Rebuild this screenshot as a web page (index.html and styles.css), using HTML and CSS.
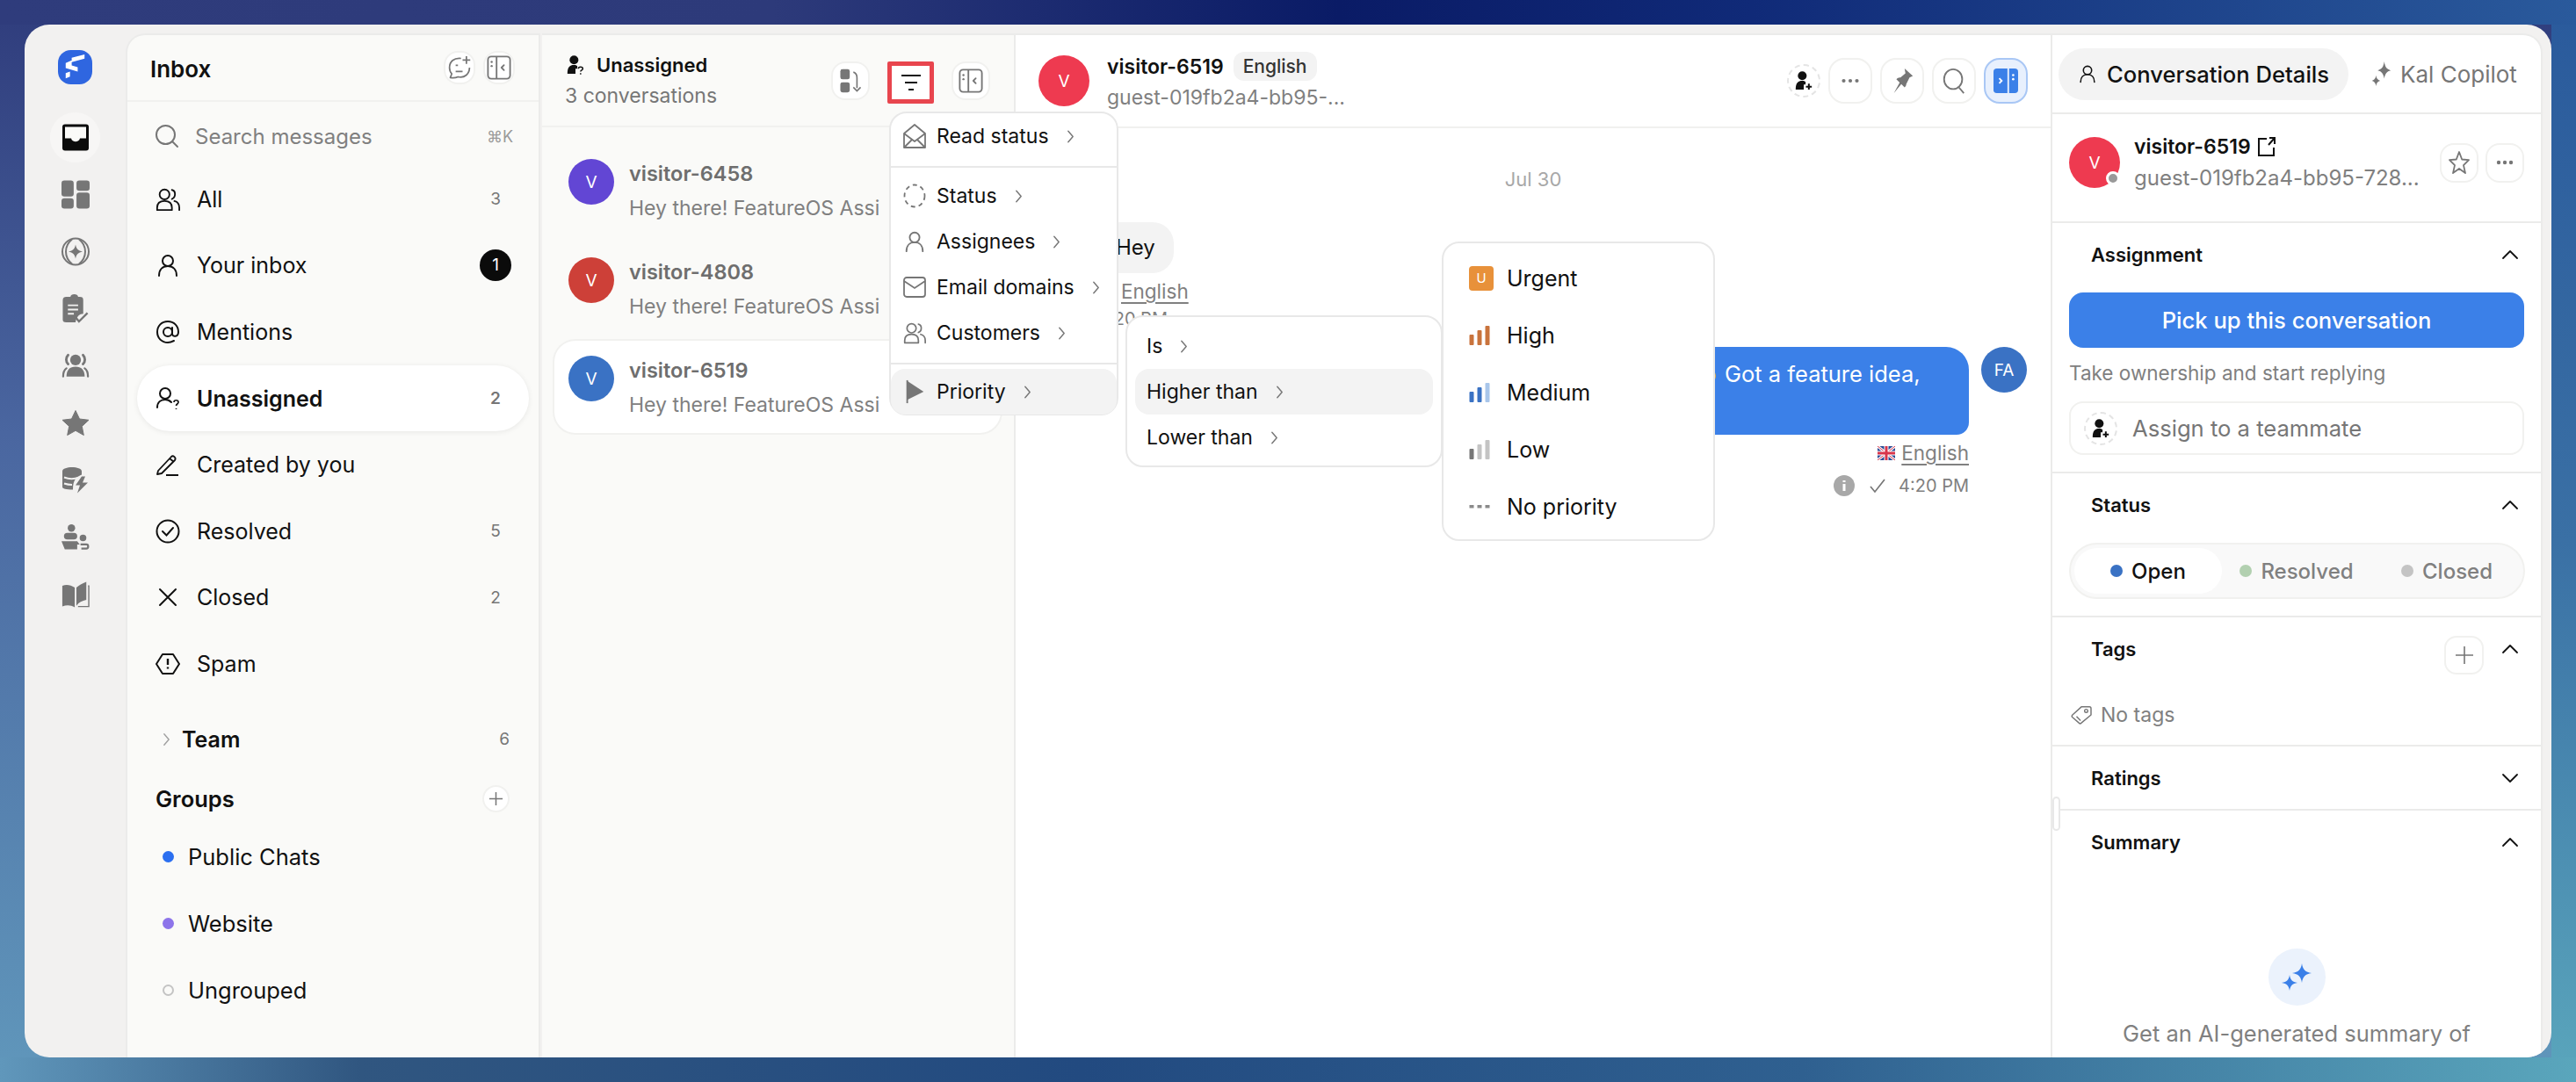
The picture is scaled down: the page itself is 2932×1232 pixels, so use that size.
FILE: index.html
```html
<!DOCTYPE html>
<html lang="en">
<head>
    <meta charset="UTF-8">
    <title>Inbox</title>
    <link rel="stylesheet" href="styles.css">
</head>
<body>
<svg class="defs" width="0" height="0">
    <symbol id="chev-right" viewBox="0 0 10 18"><path d="M2 2l6 7-6 7" fill="none" stroke="currentColor" stroke-width="1.6" stroke-linecap="round" stroke-linejoin="round"/></symbol>
    <symbol id="chev-up" viewBox="0 0 20 12"><path d="M2 10l8-8 8 8" fill="none" stroke="currentColor" stroke-width="1.8" stroke-linecap="round" stroke-linejoin="round"/></symbol>
    <symbol id="user" viewBox="0 0 28 28"><circle cx="14" cy="9" r="6" fill="none" stroke="currentColor" stroke-width="2"/><path d="M4 26c0-7 4-11 10-11s10 4 10 11" fill="none" stroke="currentColor" stroke-width="2" stroke-linecap="round"/></symbol>
    <symbol id="users" viewBox="0 0 30 28"><circle cx="11" cy="8" r="6" fill="none" stroke="currentColor" stroke-width="2"/><path d="M20 2.500c5 1 5 9 0 11M2 27v-3c0-5 3-8 9-8s9 3 9 8v3zM23 16c4 1 6 4 6 8v3" fill="none" stroke="currentColor" stroke-width="2" stroke-linecap="round" stroke-linejoin="round"/></symbol>
    <symbol id="panel" viewBox="0 0 30 30"><rect x="1.500" y="1.500" width="27" height="27" rx="4" fill="none" stroke="currentColor" stroke-width="2"/><path d="M12 2v26M21 12l-3 3 3 3" fill="none" stroke="currentColor" stroke-width="2" stroke-linecap="round" stroke-linejoin="round"/><circle cx="6" cy="8" r="1.300" fill="currentColor"/><circle cx="6" cy="13" r="1.300" fill="currentColor"/></symbol>
    <symbol id="assign" viewBox="0 0 24 28"><circle cx="10" cy="7" r="6" fill="currentColor"/><path d="M1 26c0-9 3-12 9-12 2 0 3.500.5 4.500 1.500V19H12v7z" fill="currentColor"/><path d="M19 18v8M15 22h8" stroke="currentColor" stroke-width="2.400"/></symbol>
    <symbol id="sparkle" viewBox="0 0 36 32"><path d="M24 0c1 7 4 10 11 11-7 1-10 4-11 11-1-7-4-10-11-11 7-1 10-4 11-11zM10 13c.8 5.500 3 8 9 9-6 1-8.200 3.500-9 9-.8-5.500-3-8-9-9 6-1 8.200-3.500 9-9z" fill="currentColor"/></symbol>
</svg>

<div class="window">
    <!-- Rail -->
    <aside class="rail">
        <svg class="logo" viewBox="0 0 40 40"><rect width="40" height="40" rx="15" fill="#2f66e0"/><path d="M16 9l15-4v5l-15 4zM9 15l7-3v6l7 2v5L9 21zM9 27l5-2v6l-5 2z" fill="#fff"/></svg>
        <a class="rail-btn active"><svg viewBox="0 0 32 32"><rect x="1" y="1" width="30" height="30" rx="3" fill="#0b0b0b"/><path d="M4 4h24v13h-7c-1 5-9 5-10 0H4z" fill="#fafaf8"/></svg></a>
        <a class="rail-btn"><svg viewBox="0 0 30 30"><g fill="#767676"><rect width="13" height="17" rx="3"/><rect x="16" width="14" height="11" rx="3"/><rect y="19" width="13" height="11" rx="3"/><rect x="16" y="13" width="14" height="17" rx="3"/></g></svg></a>
        <a class="rail-btn"><svg viewBox="0 0 32 32"><g fill="none" stroke="#767676" stroke-width="2"><circle cx="16" cy="16" r="15"/><path d="M12 2c-5 4-7 8-7 14s2 10 7 14M20 2c5 4 7 8 7 14s-2 10-7 14"/></g><path d="M16 8c1 5 3 7 8 8-5 1-7 3-8 8-1-5-3-7-8-8 5-1 7-3 8-8z" fill="#767676"/></svg></a>
        <a class="rail-btn"><svg viewBox="0 0 30 34"><path d="M8 3h1c0-4 9-4 9 0h2c3 0 4 1 4 4v16c-4 0-8 3-9 10H4c-3 0-4-1-4-3V7c0-3 2-4 4-4z" fill="#767676"/><path d="M6 13h12M6 18h12M6 23h7" stroke="#f2f1f0" stroke-width="2"/><path d="M15 27l4 5 10-10" fill="none" stroke="#767676" stroke-width="2.400"/></svg></a>
        <a class="rail-btn"><svg viewBox="0 0 34 28"><circle cx="17" cy="7" r="6.500" fill="#767676"/><path d="M8 1C5 4 5 9 8 12M26 1c3 3 3 8 0 11" fill="none" stroke="#767676" stroke-width="3" stroke-linecap="round"/><path d="M6 27c0-8 4-12 11-12s11 4 11 12z" fill="#767676"/><path d="M2 27c0-4 1-8 4-10M32 27c0-4-1-8-4-10" fill="none" stroke="#767676" stroke-width="2.400" stroke-linecap="round"/></svg></a>
        <a class="rail-btn"><svg viewBox="0 0 32 30"><path d="M16 1l4.500 9.500 10.500 1.300-7.700 7.100 2 10.100-9.300-5.200-9.300 5.200 2-10.100L1 11.800l10.500-1.300z" fill="#767676" stroke="#767676" stroke-linejoin="round"/></svg></a>
        <a class="rail-btn"><svg viewBox="0 0 32 32"><path d="M1 6c0-6 22-6 22 0v4c-6 3-10 5-10 17-8 0-12-1-12-3z" fill="#767676"/><path d="M3 13c5 2 12 2 17 0M3 20c3 1 6 1.500 9 1.500" stroke="#f2f1f0" stroke-width="2" fill="none"/><path d="M23 12l-7 10h5l-3 9 12-12h-6l3-7z" fill="#767676"/></svg></a>
        <a class="rail-btn"><svg viewBox="0 0 34 32"><circle cx="12" cy="5" r="4.500" fill="#767676"/><rect x="3" y="11" width="16" height="8" rx="4" fill="#767676"/><path d="M0 21h19l3 4h-3v6H4z" fill="#767676"/><circle cx="26" cy="17" r="4" fill="#767676"/><path d="M23 25h7c3 0 3 5 0 5h-6" fill="none" stroke="#767676" stroke-width="2.400"/></svg></a>
        <a class="rail-btn"><svg viewBox="0 0 34 32"><path d="M1 6c5-2 10-1 15 2v24c-5-3-10-3-15-1zM18 8c3-3 7-5 12-7v22c-5 1-9 3-12 7z" fill="#767676"/><path d="M32 6h1v25H20" fill="none" stroke="#767676" stroke-width="1.500"/></svg></a>
    </aside>

    <!-- Inbox nav -->
    <nav class="inbox">
        <header class="inbox-head">
            <h1>Inbox</h1>
            <div class="head-btns">
                <button class="round-btn"><svg viewBox="0 0 30 32"><path d="M17 4C8 3 2 8 2 16c0 3 1 6 3 8l-2 5c5 1 8 0 10-1 9 2 15-4 15-12" fill="none" stroke="#767676" stroke-width="2" stroke-linejoin="round"/><path d="M24 1v10M19 6h10M10 13h3M10 21h9" stroke="#767676" stroke-width="2"/></svg></button>
                <button class="round-btn"><svg class="i-panel"><use href="#panel"/></svg></button>
            </div>
        </header>
        <div class="search">
            <svg class="nav-icon gray" viewBox="0 0 28 28"><circle cx="12.500" cy="12.500" r="10.500" fill="none" stroke="currentColor" stroke-width="2"/><path d="M20 20l6 6" stroke="currentColor" stroke-width="2" stroke-linecap="round"/></svg>
            <span class="search-text">Search messages</span>
            <span class="kbd">⌘K</span>
        </div>
        <a class="nav-row"><svg class="nav-icon"><use href="#users"/></svg><span>All</span><em>3</em></a>
        <a class="nav-row"><svg class="nav-icon"><use href="#user"/></svg><span>Your inbox</span><b class="badge">1</b></a>
        <a class="nav-row"><svg class="nav-icon" viewBox="0 0 28 28"><circle cx="14" cy="14" r="5" fill="none" stroke="currentColor" stroke-width="2"/><path d="M19 9v7c0 4 7 4 7-2 0-7-5-12-12-12S2 7 2 14s5 12 12 12c3 0 5-1 7-2" fill="none" stroke="currentColor" stroke-width="2" stroke-linecap="round"/></svg><span>Mentions</span></a>
        <a class="nav-row current"><svg class="nav-icon" viewBox="0 0 28 28"><circle cx="11" cy="8" r="6" fill="none" stroke="currentColor" stroke-width="2"/><path d="M2 24c0-6 4-9 9-9 3 0 5 1 7 3" fill="none" stroke="currentColor" stroke-width="2" stroke-linecap="round"/><path d="M21 18c0-3 5-3 5 0 0 2-2.500 2-2.500 4M23.500 25v1" fill="none" stroke="currentColor" stroke-width="1.700"/></svg><span>Unassigned</span><em>2</em></a>
        <a class="nav-row"><svg class="nav-icon" viewBox="0 0 28 28"><path d="M3 21L18 5c2-2 6 1 4 4L7 24l-5 1zM16 7l5 4M12 26h14" fill="none" stroke="currentColor" stroke-width="1.800" stroke-linejoin="round"/></svg><span>Created by you</span></a>
        <a class="nav-row"><svg class="nav-icon" viewBox="0 0 28 28"><circle cx="14" cy="14" r="12.500" fill="none" stroke="currentColor" stroke-width="2"/><path d="M8 14l4.500 4.500L20 10" fill="none" stroke="currentColor" stroke-width="2" stroke-linecap="round"/></svg><span>Resolved</span><em>5</em></a>
        <a class="nav-row"><svg class="nav-icon" viewBox="0 0 28 28"><path d="M5 5l18 18M23 5L5 23" stroke="currentColor" stroke-width="2" stroke-linecap="round"/></svg><span>Closed</span><em>2</em></a>
        <a class="nav-row"><svg class="nav-icon" viewBox="0 0 28 28"><path d="M8 3h12l7 11-7 11H8L1 14z" fill="none" stroke="currentColor" stroke-width="2" stroke-linejoin="round"/><path d="M14 8v7M14 17.500v2" stroke="currentColor" stroke-width="2.400"/></svg><span>Spam</span></a>

        <div class="team-row">
            <svg class="team-chev"><use href="#chev-right"/></svg>
            <strong>Team</strong>
            <em>6</em>
        </div>
        <div class="groups-head">
            <strong>Groups</strong>
            <button class="round-btn small"><svg viewBox="0 0 18 18"><path d="M9 1v16M1 9h16" stroke="#767676" stroke-width="1.600"/></svg></button>
        </div>
        <a class="group-row"><i class="dot blue"></i>Public Chats</a>
        <a class="group-row"><i class="dot purple"></i>Website</a>
        <a class="group-row"><i class="dot empty"></i>Ungrouped</a>
    </nav>

    <!-- Conversation list -->
    <section class="list">
        <header class="list-head">
            <div>
                <div class="list-title">
                    <svg class="i-assign" viewBox="0 0 24 28"><circle cx="10" cy="7" r="6" fill="#111"/><path d="M1 26c0-9 3-12 9-12 2 0 3.500.5 4.500 1.500V19H12v7z" fill="#111"/><path d="M16 19c0-3 6-3 6 0 0 2-3 2-3 4M19 25v2" fill="none" stroke="#111" stroke-width="1.800"/></svg>Unassigned
                </div>
                <div class="list-sub">3 conversations</div>
            </div>
            <div class="list-btns">
                <button class="round-btn tall"><svg viewBox="0 0 28 34"><rect y="1" width="13" height="14" rx="3" fill="#767676"/><rect y="19" width="13" height="14" rx="3" fill="#767676"/><path d="M18 5c4 1 5 4 5 8v14M18 26l5 5 5-5" fill="none" stroke="#767676" stroke-width="2"/></svg></button>
                <button class="filter-btn"><svg viewBox="0 0 24 20"><path d="M1 2h22M5 10h14M9 18h6" stroke="#111" stroke-width="2"/></svg></button>
                <button class="round-btn tall"><svg class="i-panel"><use href="#panel"/></svg></button>
            </div>
        </header>
        <article class="conv">
            <div class="avatar violet">V</div>
            <div class="conv-body"><div class="conv-name">visitor-6458</div><div class="conv-msg">Hey there! FeatureOS Assi</div></div>
        </article>
        <article class="conv">
            <div class="avatar red">V</div>
            <div class="conv-body"><div class="conv-name">visitor-4808</div><div class="conv-msg">Hey there! FeatureOS Assi</div></div>
        </article>
        <article class="conv selected">
            <div class="avatar blue">V</div>
            <div class="conv-body"><div class="conv-name">visitor-6519</div><div class="conv-msg">Hey there! FeatureOS Assi</div></div>
        </article>
    </section>

    <!-- Thread -->
    <main class="thread">
        <header class="thread-head">
            <div class="avatar big rose">V</div>
            <div class="thread-who">
                <div class="thread-name">visitor-6519 <span class="lang-pill">English</span></div>
                <div class="thread-sub">guest-019fb2a4-bb95-...</div>
            </div>
            <div class="thread-btns">
                <button class="dashed-btn"><svg class="i-assign-sm"><use href="#assign"/></svg></button>
                <button class="square-btn"><svg class="i-dots" viewBox="0 0 24 6"><g fill="#767676"><circle cx="3" cy="3" r="2.500"/><circle cx="12" cy="3" r="2.500"/><circle cx="21" cy="3" r="2.500"/></g></svg></button>
                <button class="square-btn"><svg viewBox="0 0 28 32"><path d="M17 1l10 9-4 2-4 8c0 2-1 3-2 4l-4-4-9 11 7-13-4-4c2-2 4-2 5-2l6-5z" fill="#767676"/></svg></button>
                <button class="square-btn"><svg viewBox="0 0 28 32"><ellipse cx="13" cy="14" rx="11" ry="12" fill="none" stroke="#767676" stroke-width="2"/><path d="M20 24l6 7" stroke="#767676" stroke-width="2"/></svg></button>
                <button class="square-btn on"><svg viewBox="0 0 30 30"><rect width="30" height="30" rx="4" fill="#3b80e8"/><path d="M18 0v30" stroke="#e8f0fd" stroke-width="2"/><path d="M7 12l3 3-3 3" fill="none" stroke="#fff" stroke-width="2"/><circle cx="24" cy="8" r="1.400" fill="#fff"/><circle cx="24" cy="13" r="1.400" fill="#fff"/></svg></button>
            </div>
        </header>
        <div class="messages">
            <div class="date">Jul 30</div>
            <div class="msg-in">
                <div class="avatar rose">V</div>
                <div>
                    <div class="bubble-in">Hey</div>
                    <div class="msg-lang"><svg class="flag" viewBox="0 0 20 16"><rect width="20" height="16" fill="#2b4a94"/><path d="M0 0l20 16M20 0L0 16" stroke="#fff" stroke-width="3"/><path d="M10 0v16M0 8h20" stroke="#fff" stroke-width="5"/><path d="M10 0v16M0 8h20" stroke="#d8344a" stroke-width="3"/></svg><u>English</u></div>
                    <div class="msg-time">4:20 PM</div>
                </div>
            </div>
            <div class="msg-out">
                <div class="msg-out-col">
                    <div class="bubble-out"><i class="wave"></i>Got a feature idea,</div>
                    <div class="msg-lang"><svg class="flag" viewBox="0 0 20 16"><rect width="20" height="16" fill="#2b4a94"/><path d="M0 0l20 16M20 0L0 16" stroke="#fff" stroke-width="3"/><path d="M0 0l20 16M20 0L0 16" stroke="#d8344a" stroke-width="1"/><path d="M10 0v16M0 8h20" stroke="#fff" stroke-width="5"/><path d="M10 0v16M0 8h20" stroke="#d8344a" stroke-width="3"/></svg><u>English</u></div>
                    <div class="msg-meta">
                        <svg class="i-info" viewBox="0 0 24 24"><circle cx="12" cy="12" r="12" fill="#a8a8a8"/><path d="M12 10v8M12 6v2" stroke="#fff" stroke-width="3"/></svg>
                        <svg class="i-check" viewBox="0 0 20 18"><path d="M2 10l5 6L18 2" fill="none" stroke="#767676" stroke-width="1.700"/></svg>
                        <span>4:20 PM</span>
                    </div>
                </div>
                <div class="avatar blue">FA</div>
            </div>
        </div>
    </main>

    <!-- Details -->
    <aside class="details">
        <span class="resize-handle"></span>
        <div class="tabs">
            <a class="tab active"><svg class="i-tab"><use href="#user"/></svg>Conversation Details</a>
            <a class="tab kal"><svg class="i-kal" viewBox="0 0 24 30"><path d="M16 0c1 7 3 9 8 11-5 1-7 4-8 10-1-6-3-9-8-10 5-2 7-4 8-11zM6 17c.5 4 2 5.500 5 6.500-3 1-4.500 2.500-5 6.500-.5-4-2-5.500-5-6.500 3-1 4.500-2.500 5-6.500z" fill="#767676"/></svg>Kal Copilot</a>
        </div>
        <div class="profile">
            <div class="avatar big rose">V<i class="presence"></i></div>
            <div class="profile-who">
                <div class="profile-name">visitor-6519 <svg class="i-ext" viewBox="0 0 20 22"><path d="M10 2H1v19h17v-9M13 1h6v7M19 1l-7 8" fill="none" stroke="#111" stroke-width="2"/></svg></div>
                <div class="profile-sub">guest-019fb2a4-bb95-728...</div>
            </div>
            <button class="mini-btn"><svg viewBox="0 0 24 28"><path d="M12 2l3.200 8.500 7.800.6-6 6 2 9L12 21l-7 5.100 2-9-6-6 7.800-.6z" fill="none" stroke="#767676" stroke-width="1.800" stroke-linejoin="round"/></svg></button>
            <button class="mini-btn"><svg class="i-dots-sm" viewBox="0 0 20 6"><g fill="#767676"><circle cx="3" cy="3" r="2.200"/><circle cx="10" cy="3" r="2.200"/><circle cx="17" cy="3" r="2.200"/></g></svg></button>
        </div>

        <section class="block assignment">
            <div class="block-head"><h3>Assignment</h3><svg class="caret"><use href="#chev-up"/></svg></div>
            <button class="pick-btn">Pick up this conversation</button>
            <p class="hint">Take ownership and start replying</p>
            <div class="assign-box"><span class="dashed-btn"><svg class="i-assign-sm"><use href="#assign"/></svg></span>Assign to a teammate</div>
        </section>

        <section class="block status-block">
            <div class="block-head"><h3>Status</h3><svg class="caret"><use href="#chev-up"/></svg></div>
            <div class="segments">
                <span class="seg on"><i class="seg-dot open"></i>Open</span>
                <span class="seg"><i class="seg-dot resolved"></i>Resolved</span>
                <span class="seg"><i class="seg-dot closed"></i>Closed</span>
            </div>
        </section>

        <section class="block tags-block">
            <div class="block-head"><h3>Tags</h3><button class="tag-add"><svg viewBox="0 0 20 20"><path d="M10 0v20M0 10h20" stroke="#767676" stroke-width="1.600"/></svg></button><svg class="caret"><use href="#chev-up"/></svg></div>
            <div class="no-tags"><svg viewBox="0 0 26 24"><path d="M2 12L13 2h10c1 0 2 1 2 2v8L13 22c-1 1-2 1-3 0l-8-7c-1-1-1-2 0-3zM7 14l5 5" fill="none" stroke="#767676" stroke-width="1.600" stroke-linejoin="round"/><circle cx="19" cy="7" r="2" fill="none" stroke="#767676" stroke-width="1.500"/></svg>No tags</div>
        </section>

        <section class="block ratings-block">
            <div class="block-head"><h3>Ratings</h3><svg class="caret down"><use href="#chev-up"/></svg></div>
        </section>

        <section class="summary-block">
            <div class="block-head"><h3>Summary</h3><svg class="caret"><use href="#chev-up"/></svg></div>
            <div class="spark-circle"><svg class="i-spark"><use href="#sparkle"/></svg></div>
            <p class="summary-text">Get an AI-generated summary of</p>
        </section>
    </aside>

    <!-- Filter menus -->
    <div class="menu menu-filter">
        <div class="menu-group">
            <a class="menu-item"><svg viewBox="0 0 26 28"><path d="M1 11L13 1l12 10v16H1zM1 11l12 9 12-9M1 27l9-9M25 27l-9-9" fill="none" stroke="#767676" stroke-width="1.800" stroke-linejoin="round"/></svg>Read status<svg class="i-chev"><use href="#chev-right"/></svg></a>
        </div>
        <div class="menu-group">
            <a class="menu-item"><svg viewBox="0 0 26 28"><ellipse cx="13" cy="14" rx="11.500" ry="12.500" fill="none" stroke="#767676" stroke-width="1.800" stroke-dasharray="5 4"/></svg>Status<svg class="i-chev"><use href="#chev-right"/></svg></a>
            <a class="menu-item"><svg class="gray"><use href="#user"/></svg>Assignees<svg class="i-chev"><use href="#chev-right"/></svg></a>
            <a class="menu-item"><svg viewBox="0 0 26 26"><rect x="1" y="2" width="24" height="22" rx="3" fill="none" stroke="#767676" stroke-width="1.800"/><path d="M1 6l12 8 12-8" fill="none" stroke="#767676" stroke-width="1.800"/></svg>Email domains<svg class="i-chev"><use href="#chev-right"/></svg></a>
            <a class="menu-item"><svg class="gray"><use href="#users"/></svg>Customers<svg class="i-chev"><use href="#chev-right"/></svg></a>
        </div>
        <div class="menu-group last">
            <a class="menu-item hover"><svg viewBox="0 0 26 30"><path d="M4 1v28" stroke="#767676" stroke-width="2"/><path d="M4 2l20 13-20 10z" fill="#767676"/></svg>Priority<svg class="i-chev"><use href="#chev-right"/></svg></a>
        </div>
    </div>

    <div class="menu menu-op">
        <a class="menu-item">Is<svg class="i-chev"><use href="#chev-right"/></svg></a>
        <a class="menu-item hover">Higher than<svg class="i-chev"><use href="#chev-right"/></svg></a>
        <a class="menu-item">Lower than<svg class="i-chev"><use href="#chev-right"/></svg></a>
    </div>

    <div class="menu menu-prio">
        <a class="prio-item"><span class="urgent">U</span>Urgent</a>
        <a class="prio-item"><svg viewBox="0 0 24 22"><rect y="10" width="5" height="12" rx="1" fill="#c9733c"/><rect x="9" y="5" width="5" height="17" rx="1" fill="#c9733c"/><rect x="18" width="5" height="22" rx="1" fill="#c9733c"/></svg>High</a>
        <a class="prio-item"><svg viewBox="0 0 24 22"><rect y="10" width="5" height="12" rx="1" fill="#3a72c4"/><rect x="9" y="5" width="5" height="17" rx="1" fill="#3a72c4"/><rect x="18" width="5" height="22" rx="1" fill="#a9c6ea"/></svg>Medium</a>
        <a class="prio-item"><svg viewBox="0 0 24 22"><rect y="10" width="5" height="12" rx="1" fill="#767676"/><rect x="9" y="5" width="5" height="17" rx="1" fill="#c4c4c4"/><rect x="18" width="5" height="22" rx="1" fill="#c4c4c4"/></svg>Low</a>
        <a class="prio-item"><svg viewBox="0 0 24 22"><g fill="#8a8a8a"><rect y="9" width="5" height="3.500"/><rect x="9" y="9" width="5" height="3.500"/><rect x="18" y="9" width="5" height="3.500"/></g></svg>No priority</a>
    </div>
</div>
</body>
</html>
```

FILE: styles.css
```css
/* Page */
* {
    box-sizing: border-box;
}

body {
    margin: 0;
    width: 2932px;
    height: 1232px;
    padding: 28px;
    overflow: hidden;
    font-family: Inter, "Noto Sans", sans-serif;
    font-size: 24px;
    color: #111;
    background:
        linear-gradient(90deg, #2f3c7c 0%, #2d3a7a 30%, #0a1b66 52%, #102a78 68%, #2a5a9c 100%) top / 100% 28px no-repeat,
        linear-gradient(90deg, #6097bb 0%, #305680 14%, #224a80 42%, #2f6090 70%, #5aa6bc 100%) bottom / 100% 28px no-repeat,
        linear-gradient(180deg, #2a5a9c 0%, #3a70a5 50%, #5aa6bc 100%) right / 28px 100% no-repeat,
        linear-gradient(180deg, #2f3c7c 0%, #4a66a0 40%, #6097bb 100%);
}

button {
    padding: 0;
    font: inherit;
    cursor: pointer;
}

a {
    color: inherit;
}

em {
    font-style: normal;
}

.defs {
    position: absolute;
}

.window {
    position: relative;
    display: flex;
    height: 1176px;
    padding: 10px 10px 0 0;
    overflow: hidden;
    background-color: #f2f1f0;
    border-radius: 28px;
}

/* Rail */
.rail {
    flex: 0 0 115px;
    display: flex;
    flex-direction: column;
    align-items: center;
    padding-top: 19px;
}

.logo {
    width: 39px;
    height: 39px;
    margin-bottom: 28px;
}

.rail-btn {
    flex: 0 0 65px;
    width: 65px;
    display: flex;
    align-items: center;
    justify-content: center;
}

.rail-btn svg {
    width: 32px;
    height: 33px;
}

.rail-btn.active {
    position: relative;
    background: radial-gradient(circle closest-side, #f7f6f5 0 28px, transparent 29px);
}

/* Inbox nav */
.inbox {
    flex: 0 0 472px;
    background-color: #fafaf8;
    border-top-left-radius: 22px;
    border-top: 2px solid #ebebea;
    border-left: 2px solid #ebebea;
    border-right: 2px solid #ebebea;
    margin-right: 2px;
}

.inbox-head {
    display: flex;
    align-items: center;
    justify-content: space-between;
    height: 76px;
    padding: 0 27px 0 26px;
    border-bottom: 2px solid #f1f1ef;
}

.inbox-head h1 {
    margin: 2px 0 0;
    font-size: 26px;
    font-weight: 600;
}

.head-btns {
    display: flex;
    gap: 9px;
}

.round-btn {
    width: 36px;
    height: 38px;
    display: flex;
    align-items: center;
    justify-content: center;
    color: #767676;
    background-color: #fff;
    border: 2px solid #f1f1ef;
    border-radius: 16px;
}

.round-btn svg {
    width: 28px;
    height: 28px;
}

.round-btn.small {
    width: 31px;
    height: 31px;
    border-radius: 50%;
}

.round-btn.small svg {
    width: 17px;
    height: 17px;
}

.round-btn.tall {
    width: 44px;
    height: 44px;
}

.search {
    display: flex;
    align-items: center;
    height: 73px;
    padding: 5px 29px 0 31px;
    color: #808080;
}

.search-text {
    flex: 1;
    margin-left: 18px;
}

.kbd {
    font-size: 18px;
    color: #9a9a9a;
}

.nav-icon {
    flex: 0 0 28px;
    width: 28px;
    height: 28px;
    margin-right: 19px;
    color: #111;
}

.nav-icon.gray {
    color: #767676;
}

.search .nav-icon {
    margin-right: 0;
}

.nav-row {
    display: flex;
    align-items: center;
    height: 75.6px;
    margin: 0 11px;
    padding: 0 20px 0 21px;
    font-size: 25px;
    border-radius: 38px;
}

.nav-row span {
    flex: 1;
}

.nav-row em {
    width: 36px;
    text-align: center;
    font-size: 19px;
    color: #767676;
}

.badge {
    width: 36px;
    height: 36px;
    line-height: 36px;
    text-align: center;
    font-size: 19px;
    font-weight: 400;
    color: #fff;
    background-color: #0b0b0b;
    border-radius: 50%;
}

.nav-row.current {
    font-weight: 600;
    background-color: #fff;
    box-shadow: 0 1px 6px rgba(0, 0, 0, 0.08);
}

.team-row {
    display: flex;
    align-items: center;
    height: 60px;
    margin-top: 18px;
    padding: 0 33px 0 40px;
}

.team-chev {
    width: 9px;
    height: 16px;
    margin-right: 13px;
    color: #a0a0a0;
}

.team-row strong {
    flex: 1;
    font-size: 25px;
    font-weight: 600;
}

.team-row em {
    font-size: 19px;
    color: #767676;
}

.groups-head {
    display: flex;
    align-items: center;
    justify-content: space-between;
    height: 60px;
    margin: 8px 0 -2px;
    padding: 0 33px 0 32px;
}

.groups-head strong {
    font-size: 25.5px;
    font-weight: 600;
}

.group-row {
    display: flex;
    align-items: center;
    height: 76px;
    padding-left: 40px;
    font-size: 25.5px;
}

.dot {
    width: 13px;
    height: 13px;
    margin-right: 16px;
    border-radius: 50%;
}

.dot.blue {
    background-color: #2b6ff0;
}

.dot.purple {
    background-color: #8d74ea;
}

.dot.empty {
    border: 2px solid #c4c4c4;
}

/* Conversation list */
.list {
    position: relative;
    flex: 0 0 537px;
    background-color: #fafaf8;
    border-top: 2px solid #ebebea;
}

.list-head {
    display: flex;
    align-items: center;
    justify-content: space-between;
    height: 105px;
    padding: 0 27px 0 26px;
    border-bottom: 2px solid #f1f1ef;
}

.list-title {
    display: flex;
    align-items: center;
    padding-left: 2px;
    font-size: 22px;
    font-weight: 600;
}

.i-assign {
    width: 20px;
    height: 24px;
    margin-right: 14px;
}

.list-sub {
    margin-top: 8px;
    font-size: 23px;
    color: #767676;
}

.list-btns {
    display: flex;
    align-items: center;
    gap: 20px;
}

.filter-btn {
    width: 53px;
    height: 48px;
    margin-top: 4px;
    display: flex;
    align-items: center;
    justify-content: center;
    background-color: #fff;
    border: 5px solid #e8454e;
    border-radius: 2px;
}

.filter-btn svg {
    width: 24px;
    height: 20px;
}

.conv {
    display: flex;
    height: 105px;
    margin: 7px 15px 0 14px;
    padding: 17px 16px;
    border-radius: 24px;
}

.conv:first-of-type {
    margin-top: 19px;
}

.conv.selected {
    background-color: #fff;
    box-shadow: 0 0 0 2px #f1f1ef;
}

.avatar {
    flex: 0 0 52px;
    position: relative;
    width: 52px;
    height: 52px;
    display: flex;
    align-items: center;
    justify-content: center;
    font-size: 19px;
    color: #fff;
    border-radius: 50%;
}

.avatar.big {
    flex-basis: 58px;
    width: 58px;
    height: 58px;
}

.violet {
    background-color: #6246d4;
}

.red {
    background-color: #cd4038;
}

.blue {
    background-color: #3a72c4;
}

.rose {
    background-color: #ee3a50;
}

.conv-body {
    margin-left: 17px;
}

.conv-name {
    margin-top: 2px;
    font-size: 23.5px;
    font-weight: 600;
    color: #6e6e6e;
}

.conv-msg {
    margin-top: 11px;
    font-size: 23px;
    color: #808080;
    white-space: nowrap;
}

/* Thread */
.thread {
    flex: 0 0 1180px;
    background-color: #fff;
    border-top: 2px solid #ebebea;
    border-left: 2px solid #ebebea;
}

.thread-head {
    display: flex;
    align-items: center;
    height: 106px;
    padding: 0 26px;
    border-bottom: 2px solid #f1f1ef;
}

.thread-who {
    flex: 1;
    margin-left: 20px;
}

.thread-name {
    display: flex;
    align-items: center;
    gap: 11px;
    font-size: 23px;
    font-weight: 600;
}

.lang-pill {
    padding: 4px 11px;
    font-size: 21px;
    font-weight: 500;
    color: #333;
    background-color: #f3f3f3;
    border-radius: 12px;
}

.thread-sub {
    margin-top: 5px;
    font-size: 23px;
    color: #808080;
}

.thread-btns {
    display: flex;
    align-items: center;
    gap: 9px;
}

.dashed-btn {
    width: 38px;
    height: 38px;
    display: inline-flex;
    align-items: center;
    justify-content: center;
    background: none;
    border: 2px dashed #e4e4e4;
    border-radius: 50%;
}

.i-assign-sm {
    width: 20px;
    height: 26px;
    color: #111;
}

.square-btn {
    width: 50px;
    height: 52px;
    display: flex;
    align-items: center;
    justify-content: center;
    background-color: #fff;
    border: 2px solid #f1f1ef;
    border-radius: 18px;
}

.square-btn svg {
    width: 28px;
    height: 30px;
}

.square-btn svg.i-dots {
    width: 20px;
    height: 6px;
}

.square-btn.on {
    background-color: #e8f0fd;
    border-color: #a9c7f5;
}

.messages {
    padding: 45px 27px 0 21px;
}

.date {
    padding-left: 6px;
    text-align: center;
    font-size: 22px;
    color: #a8a8a8;
}

.msg-in {
    display: flex;
    gap: 20px;
    height: 142px;
    margin-top: 36px;
}

.bubble-in {
    display: inline-block;
    height: 58px;
    line-height: 58px;
    padding: 0 21px;
    background-color: #f3f3f3;
    border-radius: 24px;
}

.msg-lang {
    display: flex;
    align-items: center;
    justify-content: flex-start;
    gap: 7px;
    margin-top: 7px;
    font-size: 22.5px;
    color: #808080;
}

.flag {
    width: 20px;
    height: 16px;
}

.msg-lang u {
    text-underline-offset: 4px;
}

.msg-time {
    margin-top: 6px;
    font-size: 20px;
    color: #808080;
}

.msg-out {
    display: flex;
    justify-content: flex-end;
    gap: 14px;
}

.msg-out-col {
    display: flex;
    flex-direction: column;
    align-items: flex-end;
}

.bubble-out {
    width: 560px;
    height: 100px;
    padding: 15px 0 0 258px;
    font-size: 25.5px;
    color: #fff;
    background-color: #3b80e8;
    border-radius: 26px 26px 14px 26px;
}

.wave {
    display: inline-block;
    width: 14px;
    height: 14px;
    margin-right: 10px;
    background-color: #efb23c;
    border-radius: 50%;
}

.msg-meta {
    display: flex;
    align-items: center;
    margin-top: 12px;
    font-size: 20px;
    color: #808080;
}

.i-info {
    width: 24px;
    height: 24px;
    margin-right: 16px;
}

.i-check {
    width: 20px;
    height: 18px;
    margin-right: 14px;
}

/* Details */
.details {
    position: relative;
    flex: 1;
    min-width: 0;
    background-color: #fff;
    border-top: 2px solid #ebebea;
    border-left: 2px solid #ebebea;
    border-right: 2px solid #ebebea;
    border-top-right-radius: 22px;
}

.resize-handle {
    position: absolute;
    left: 0;
    top: 867px;
    width: 9px;
    height: 39px;
    background-color: #fff;
    border: 2px solid #e8e8e8;
    border-radius: 5px;
}

.tabs {
    display: flex;
    align-items: center;
    height: 90px;
    padding-left: 7px;
    border-bottom: 2px solid #ebebea;
}

.tab {
    display: flex;
    align-items: center;
    height: 59px;
    padding: 0 20px 0 22px;
    font-size: 26px;
    color: #767676;
    border-radius: 30px;
}

.tab.kal {
    padding-left: 25px;
}

.tab.active {
    width: 330px;
    padding-right: 0;
    font-size: 25.6px;
    font-weight: 500;
    color: #111;
    background-color: #f3f3f3;
    white-space: nowrap;
}

.i-tab {
    width: 22px;
    height: 24px;
    margin-right: 11px;
}

.i-kal {
    width: 24px;
    height: 28px;
    margin-right: 10px;
}

.profile {
    display: flex;
    align-items: center;
    height: 124px;
    padding: 0 19px 12px;
    border-bottom: 2px solid #ebebea;
}

.presence {
    position: absolute;
    right: 0;
    bottom: 3px;
    width: 16px;
    height: 16px;
    background-color: #999;
    border: 3px solid #fff;
    border-radius: 50%;
}

.profile-who {
    flex: 1;
    min-width: 0;
    margin-left: 16px;
}

.profile-name {
    display: flex;
    align-items: center;
    gap: 8px;
    font-size: 23px;
    font-weight: 600;
}

.i-ext {
    width: 20px;
    height: 22px;
}

.profile-sub {
    margin-top: 7px;
    font-size: 24px;
    color: #808080;
    white-space: nowrap;
}

.mini-btn {
    width: 44px;
    height: 45px;
    margin-left: 8px;
    display: flex;
    align-items: center;
    justify-content: center;
    background-color: #fff;
    border: 2px solid #f1f1ef;
    border-radius: 16px;
}

.mini-btn svg {
    width: 24px;
    height: 28px;
}

.mini-btn svg.i-dots-sm {
    width: 20px;
    height: 6px;
}

.block {
    border-bottom: 2px solid #ebebea;
}

.block-head {
    display: flex;
    align-items: center;
    height: 72px;
    padding: 0 25px 0 44px;
}

.block-head h3 {
    flex: 1;
    margin: 0;
    font-size: 22px;
    font-weight: 600;
}

.caret {
    width: 20px;
    height: 12px;
}

.caret.down {
    transform: rotate(180deg);
}

.assignment {
    height: 285px;
}

.pick-btn {
    display: block;
    width: 518px;
    height: 63px;
    margin: 7px 0 0 19px;
    font-size: 25.6px;
    font-weight: 500;
    color: #fff;
    background-color: #3b80e8;
    border: none;
    border-radius: 16px;
}

.hint {
    margin: 15px 0 0 19px;
    font-size: 22.5px;
    color: #808080;
}

.assign-box {
    display: flex;
    align-items: center;
    gap: 17px;
    width: 518px;
    height: 61px;
    margin: 19px 0 0 19px;
    padding-left: 15px;
    font-size: 25.6px;
    color: #767676;
    border: 2px solid #f1f1ef;
    border-radius: 16px;
}

.status-block {
    height: 164px;
}

.segments {
    display: flex;
    align-items: center;
    gap: 3px;
    width: 519px;
    height: 64px;
    margin: 7px 0 0 19px;
    padding: 0 4px;
    background-color: #f9f9f9;
    border: 2px solid #f1f1ef;
    border-radius: 32px;
}

.seg {
    flex: 0 0 168px;
    height: 52px;
    display: flex;
    align-items: center;
    justify-content: center;
    gap: 10px;
    padding-right: 4px;
    font-size: 24px;
    font-weight: 500;
    color: #808080;
    border-radius: 26px;
}

.seg.on {
    padding-right: 0;
    color: #111;
    background-color: #fff;
}

.seg-dot {
    width: 14px;
    height: 14px;
    border-radius: 50%;
}

.seg-dot.open {
    background-color: #3a72c4;
}

.seg-dot.resolved {
    background-color: #b2d0b0;
}

.seg-dot.closed {
    background-color: #c4c4c4;
}

.tags-block {
    height: 147px;
}

.tag-add {
    width: 45px;
    height: 44px;
    margin: 14px 20px 0 0;
    display: flex;
    align-items: center;
    justify-content: center;
    background-color: #fff;
    border: 2px solid #f1f1ef;
    border-radius: 14px;
}

.tag-add svg {
    width: 20px;
    height: 20px;
}

.no-tags {
    display: flex;
    align-items: center;
    gap: 10px;
    margin: 25px 0 0 21px;
    font-size: 23px;
    color: #808080;
}

.no-tags svg {
    width: 24px;
    height: 22px;
}

.ratings-block {
    height: 73px;
}

.spark-circle {
    width: 65px;
    height: 65px;
    margin: 85px auto 0;
    display: flex;
    align-items: center;
    justify-content: center;
    color: #3b80e8;
    background-color: #ebf2fc;
    border-radius: 50%;
}

.i-spark {
    width: 36px;
    height: 32px;
}

.summary-text {
    margin: 16px 0 0;
    text-align: center;
    font-size: 25.5px;
    color: #808080;
}

/* Menus */
.menu {
    position: absolute;
    background-color: #fff;
    border: 2px solid #e8e8e8;
    border-radius: 20px;
}

.menu-filter {
    left: 984px;
    top: 99px;
    width: 261px;
    height: 346px;
}

.menu-group {
    padding: 0 0 8px;
    border-bottom: 2px solid #e8e8e8;
}

.menu-group + .menu-group {
    padding-top: 6px;
}

.menu-group.last {
    padding-bottom: 0;
    padding-top: 5px;
    border-bottom: none;
}

.menu-item {
    display: flex;
    align-items: center;
    height: 52px;
    padding: 0 12px 0 14px;
    font-size: 23px;
    border-radius: 16px;
}

.menu-item svg {
    flex: 0 0 26px;
    width: 26px;
    height: 28px;
    margin-right: 12px;
}

.menu-item svg.gray {
    color: #767676;
}

.menu-item svg.i-chev {
    flex: 0 0 9px;
    width: 9px;
    height: 17px;
    margin: 0 0 0 20px;
    color: #767676;
}

.menu-item.hover {
    background-color: #f3f3f3;
}

.menu-op {
    left: 1253px;
    top: 331px;
    width: 361px;
    height: 173px;
    padding: 7px 9px;
}

.menu-op .menu-item {
    padding-left: 13px;
}

.menu-prio {
    left: 1613px;
    top: 247px;
    width: 311px;
    height: 341px;
    padding: 7px 0 0 29px;
}

.prio-item {
    display: flex;
    align-items: center;
    height: 65px;
    font-size: 25px;
}

.prio-item svg {
    width: 25px;
    height: 22px;
    margin-right: 18px;
}

.urgent {
    width: 28px;
    height: 28px;
    margin-right: 15px;
    text-align: center;
    line-height: 28px;
    font-size: 15px;
    color: #fff;
    background-color: #e8913a;
    border-radius: 4px;
}
```
